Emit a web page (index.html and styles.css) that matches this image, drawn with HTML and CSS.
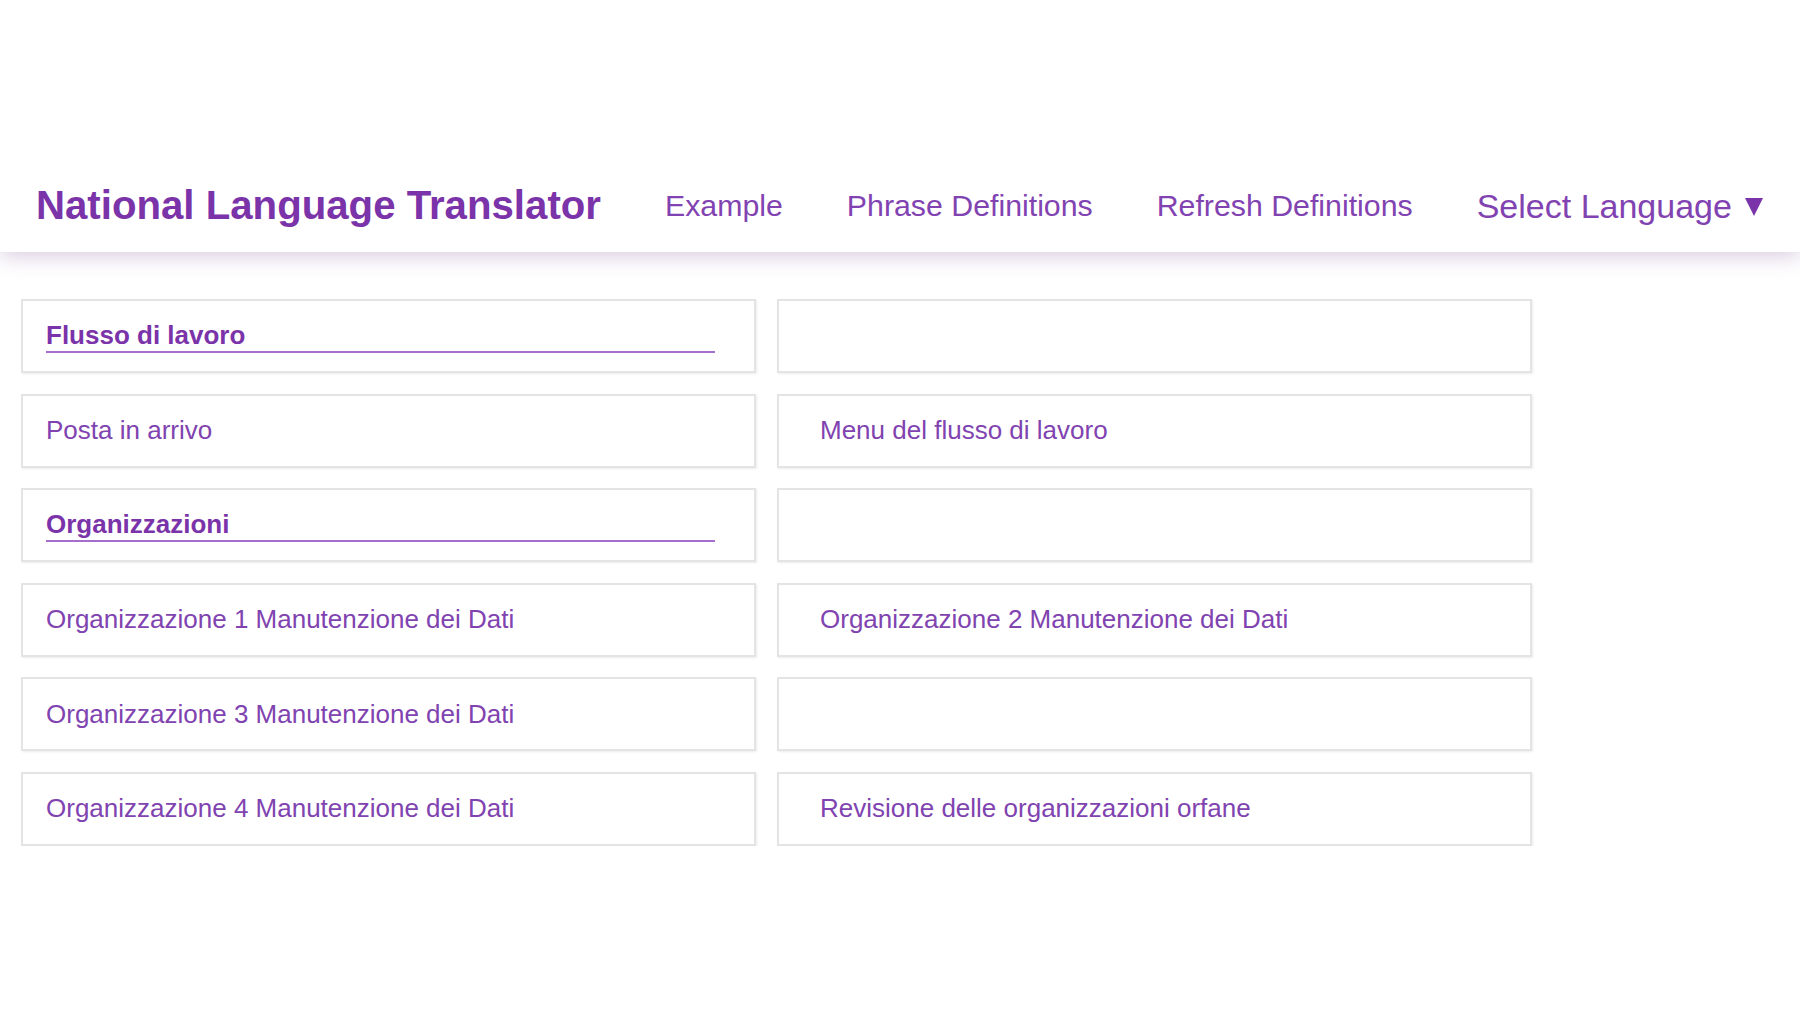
FILE: index.html
```html
<!DOCTYPE html>
<html lang="it">
  <head>
    <meta charset="utf-8" />
    <title>National Language Translator</title>
    <link rel="stylesheet" href="styles.css">
  </head>
  <body>
    <header class="topbar">
      <h1 class="brand">National Language Translator</h1>
      <nav class="nav">
        <a class="nav-link" href="#">Example</a>
        <a class="nav-link" href="#">Phrase Definitions</a>
        <a class="nav-link" href="#">Refresh Definitions</a>
        <a class="nav-link lang" href="#">Select Language
          <svg class="caret" viewBox="0 0 18 18" width="18" height="18">
            <path d="M0,0 H18 L9,18 Z" fill="#7a33a8" />
          </svg>
        </a>
      </nav>
    </header>

    <main class="menu-grid">
      <div class="card left"><span class="section">Flusso di lavoro</span></div>
      <div class="card right"></div>

      <div class="card left"><a class="item" href="#">Posta in arrivo</a></div>
      <div class="card right"><a class="item" href="#">Menu del flusso di lavoro</a></div>

      <div class="card left"><span class="section">Organizzazioni</span></div>
      <div class="card right"></div>

      <div class="card left"><a class="item" href="#">Organizzazione 1 Manutenzione dei Dati</a></div>
      <div class="card right"><a class="item" href="#">Organizzazione 2 Manutenzione dei Dati</a></div>

      <div class="card left"><a class="item" href="#">Organizzazione 3 Manutenzione dei Dati</a></div>
      <div class="card right"></div>

      <div class="card left"><a class="item" href="#">Organizzazione 4 Manutenzione dei Dati</a></div>
      <div class="card right"><a class="item" href="#">Revisione delle organizzazioni orfane</a></div>
    </main>
  </body>
</html>
```

FILE: styles.css
```css
body {
  margin: 0;
  background: #ffffff;
  font-family: "Liberation Sans", Arial, sans-serif;
  color: #7d3cab;
}

a {
  color: inherit;
  text-decoration: none;
}

.topbar {
  height: 252px;
  box-sizing: border-box;
  padding: 160px 0 0 36px;
  display: flex;
  align-items: center;
  background: #ffffff;
  box-shadow: 0 4px 20px rgba(110, 70, 140, 0.28);
  position: relative;
}

.brand {
  margin: 0;
  font-size: 40.2px;
  font-weight: bold;
  color: #7a33a8;
}

.nav {
  display: flex;
  align-items: center;
}

.nav-link {
  margin-left: 64px;
  font-size: 30.3px;
  color: #8243b2;
}

.lang {
  font-size: 34px;
  display: flex;
  align-items: center;
}

.caret {
  margin-left: 13px;
  margin-top: 2px;
}

.menu-grid {
  display: grid;
  grid-template-columns: 735px 755px;
  grid-auto-rows: 74px;
  column-gap: 21px;
  row-gap: 20.6px;
  margin: 47px 0 0 21px;
}

.card {
  border: 2px solid #e4e4e4;
  box-shadow: 1px 1px 2px rgba(0, 0, 0, 0.08);
  box-sizing: border-box;
  display: flex;
  flex-direction: column;
  justify-content: center;
  font-size: 26px;
}

.card.left {
  padding-left: 23px;
  padding-right: 39px;
}

.card.right {
  padding-left: 41px;
  padding-right: 39px;
}

.section {
  display: block;
  font-weight: bold;
  color: #7a33a8;
  border-bottom: 2px solid #a56dcc;
}

.item {
  color: #8043b0;
}
```
